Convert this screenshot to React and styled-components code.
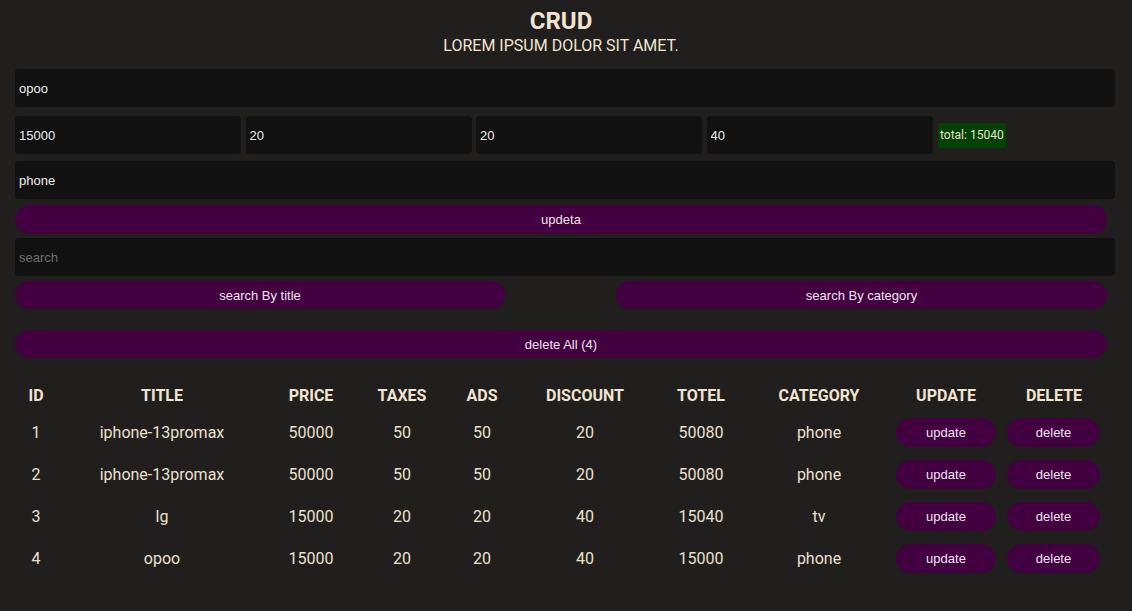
import React from "react";
import styled, {createGlobalStyle} from "styled-components";

const GlobalStyle = createGlobalStyle`
  * { box-sizing: content-box; }
  html, body { margin: 0; padding: 0; }
  body {
    background: #201f1d;
    color: #f3e4d2;
    font-family: Roboto, "Liberation Sans", sans-serif;
  }
`;

const Page = styled.div`
  width: 1092px;
  margin: 0 15px;
  padding-bottom: 20px;
`;

const Head = styled.div`
  text-align: center;
  padding-top: 8px;
`;

const Title = styled.h2`
  margin: 0;
  font-size: 24px;
  line-height: 27px;
  font-weight: 700;
`;

const Subtitle = styled.p`
  margin: 0;
  font-size: 16px;
  line-height: 22px;
  text-transform: uppercase;
`;

const Inputs = styled.div`
  margin-top: 12px;
`;

const Input = styled.input`
  display: block;
  width: ${p => p.$w || "100%"};
  height: 30px;
  padding: 4px;
  margin: 0 0 8px;
  border: none;
  outline: none;
  border-radius: 4px;
  background: #111111;
  color: #eeeeee;
  font-family: "Liberation Sans", Arial, sans-serif;
  font-size: 13px;
  &::placeholder { color: #6f6f6f; }
`;

const PriceRow = styled.div`
  display: flex;
  align-items: center;
  gap: 4.5px;
  margin: 9px 0 7px;
  ${Input} { margin: 0; }
`;

const Total = styled.small`
  margin-left: 1px;
  padding: 6px 2px;
  border-radius: 2px;
  background: #034003;
  color: #e8e3cf;
  font-size: 12px;
  line-height: 13px;
`;

const Button = styled.button`
  display: block;
  width: ${p => p.$w || "100%"};
  height: ${p => p.$h || 29}px;
  padding: 0;
  border: none;
  border-radius: 20px;
  background: #420040;
  color: #eee4f0;
  font-family: "Liberation Sans", Arial, sans-serif;
  font-size: 13px;
  cursor: pointer;
`;

const Update = styled(Button)`
  margin: -2px 0 4px;
`;

const SearchBtns = styled.div`
  display: flex;
  justify-content: space-between;
  margin-top: -3px;
`;

const DeleteAll = styled.div`
  margin-top: 21px;
`;

const Table = styled.table`
  width: 100%;
  margin-top: 28px;
  border-collapse: collapse;
  table-layout: fixed;
  text-align: center;
`;

const Th = styled.th`
  width: ${p => p.$w}px;
  padding: 0 0 5px;
  font-size: 16px;
  font-weight: 700;
  text-transform: uppercase;
  line-height: 20px;
`;

const Td = styled.td`
  height: 42px;
  padding: 0;
  font-size: 16px;
  color: #ece0cf;
`;

const CellButton = styled(Button)`
  margin: 0 0 0 ${p => p.$off}px;
  width: ${p => p.$w}px;
  height: 29px;
  font-size: 13px;
`;

const cols = [
    ["id", 42], ["title", 210], ["price", 88], ["taxes", 94], ["ads", 66],
    ["discount", 140], ["totel", 92], ["category", 144], ["update", 110], ["delete", 106]
];

const products = [
    {id: 1, title: "iphone-13promax", price: 50000, taxes: 50, ads: 50, discount: 20, total: 50080, category: "phone"},
    {id: 2, title: "iphone-13promax", price: 50000, taxes: 50, ads: 50, discount: 20, total: 50080, category: "phone"},
    {id: 3, title: "lg", price: 15000, taxes: 20, ads: 20, discount: 40, total: 15040, category: "tv"},
    {id: 4, title: "opoo", price: 15000, taxes: 20, ads: 20, discount: 40, total: 15000, category: "phone"},
];

export default function App() {
    return (
        <>
            <GlobalStyle/>
            <Page>
                <Head>
                    <Title>CRUD</Title>
                    <Subtitle>lorem ipsum dolor sit amet.</Subtitle>
                </Head>
                <Inputs>
                    <Input type="text" defaultValue="opoo" placeholder="title"/>
                    <PriceRow>
                        <Input $w="218px" type="number" defaultValue="15000" placeholder="price"/>
                        <Input $w="218px" type="number" defaultValue="20" placeholder="taxes"/>
                        <Input $w="218px" type="number" defaultValue="20" placeholder="ads"/>
                        <Input $w="218px" type="number" defaultValue="40" placeholder="discount"/>
                        <Total>total: 15040</Total>
                    </PriceRow>
                    <Input type="text" defaultValue="phone" placeholder="category"/>
                    <Update>updeta</Update>
                    <Input type="text" placeholder="search"/>
                    <SearchBtns>
                        <Button $w="490px" $h={28}>search By title</Button>
                        <Button $w="491px" $h={28}>search By category</Button>
                    </SearchBtns>
                    <DeleteAll>
                        <Button $h={28}>delete All (4)</Button>
                    </DeleteAll>
                </Inputs>
                <Table>
                    <thead>
                    <tr>
                        {cols.map(([name, w]) => <Th key={name} $w={w}>{name}</Th>)}
                    </tr>
                    </thead>
                    <tbody>
                    {products.map(p => (
                        <tr key={p.id}>
                            <Td>{p.id}</Td>
                            <Td>{p.title}</Td>
                            <Td>{p.price}</Td>
                            <Td>{p.taxes}</Td>
                            <Td>{p.ads}</Td>
                            <Td>{p.discount}</Td>
                            <Td>{p.total}</Td>
                            <Td>{p.category}</Td>
                            <Td><CellButton $w={100} $off={5}>update</CellButton></Td>
                            <Td><CellButton $w={93} $off={6}>delete</CellButton></Td>
                        </tr>
                    ))}
                    </tbody>
                </Table>
            </Page>
        </>
    );
}
